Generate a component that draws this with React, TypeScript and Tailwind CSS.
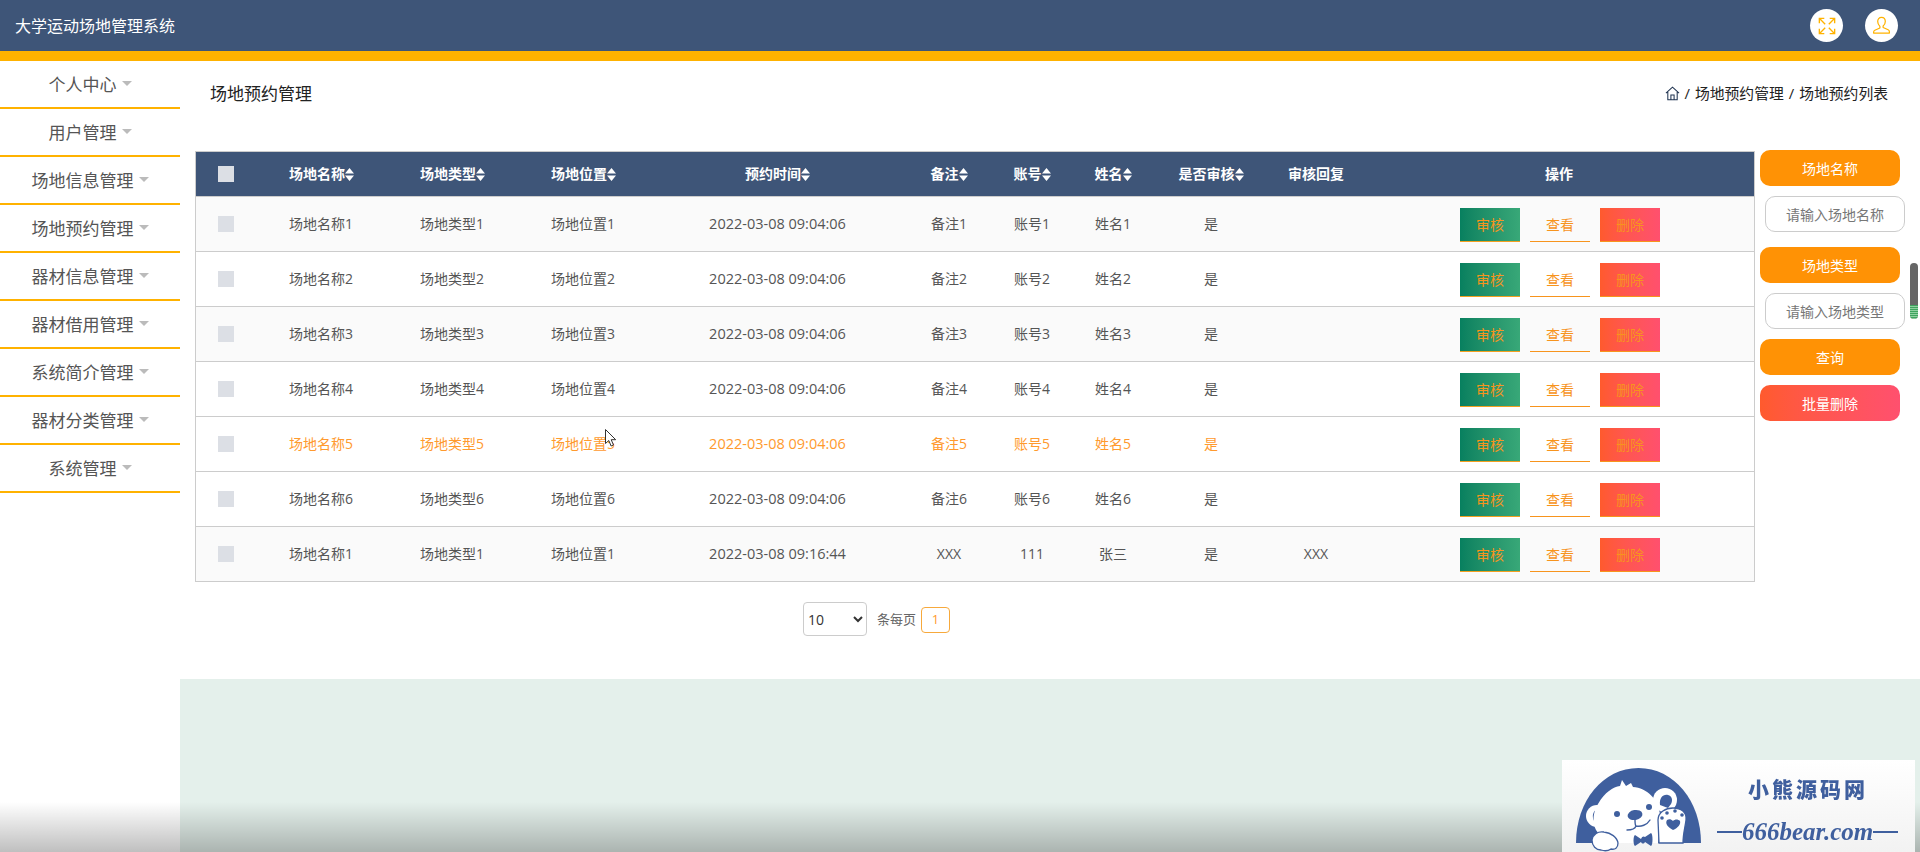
const menu = ["个人中心", "用户管理", "场地信息管理", "场地预约管理", "器材信息管理", "器材借用管理", "系统简介管理", "器材分类管理", "系统管理"]

const rows = [
  { name: "场地名称1", type: "场地类型1", place: "场地位置1", time: "2022-03-08 09:04:06", note: "备注1", account: "账号1", user: "姓名1", reply: "" },
  { name: "场地名称2", type: "场地类型2", place: "场地位置2", time: "2022-03-08 09:04:06", note: "备注2", account: "账号2", user: "姓名2", reply: "" },
  { name: "场地名称3", type: "场地类型3", place: "场地位置3", time: "2022-03-08 09:04:06", note: "备注3", account: "账号3", user: "姓名3", reply: "" },
  { name: "场地名称4", type: "场地类型4", place: "场地位置4", time: "2022-03-08 09:04:06", note: "备注4", account: "账号4", user: "姓名4", reply: "" },
  { name: "场地名称5", type: "场地类型5", place: "场地位置5", time: "2022-03-08 09:04:06", note: "备注5", account: "账号5", user: "姓名5", reply: "" },
  { name: "场地名称6", type: "场地类型6", place: "场地位置6", time: "2022-03-08 09:04:06", note: "备注6", account: "账号6", user: "姓名6", reply: "" },
  { name: "场地名称1", type: "场地类型1", place: "场地位置1", time: "2022-03-08 09:16:44", note: "XXX", account: "111", user: "张三", reply: "XXX" },
]

function Sort() {
  return (
    <svg viewBox="0 0 9 13" className="inline-block w-[9px] h-[13px] align-[-2px]" fill="#fff">
      <path d="M4.500 0 9 5.600H0zM4.500 13 0 7.400h9z" />
    </svg>
  )
}

function Head({ label, sort = true, left = false }: { label: string; sort?: boolean; left?: boolean }) {
  return (
    <th className={`font-bold text-[14px] text-white ${left ? "text-left" : "text-center"}`}>
      {label}
      {sort && <Sort />}
    </th>
  )
}

function Bear() {
  const blue = "#3f5f9e"
  return (
    <svg viewBox="0 0 125 84" className="w-[125px] h-[84px]">
      <path d="M0 75C0 33 27 0 62.500 0S125 33 125 75z" fill={blue} />
      {/* ears */}
      <circle cx="89" cy="32" r="12" fill="#fff" />
      <path d="M84 37c-1-7 3-11 8-10 4 1 5 5 3 9l-3 4z" fill={blue} />
      <circle cx="21" cy="48" r="11" fill="#fff" />
      <path d="M26 41c-6-1-10 3-9 9 0 3 3 5 5 3-1-4 0-7 4-8z" fill={blue} />
      {/* head and body */}
      <path d="M22 36C29 24 37 19 44 18L46 12L50 18L55 15L57 19C71 20 82 31 84 46L82 75H24C23 71 24 67 20 62C16 54 17 44 22 36z" fill="#fff" />
      <circle cx="41" cy="46" r="3" fill={blue} />
      <circle cx="73" cy="39" r="3" fill={blue} />
      <ellipse cx="59" cy="47" rx="7.500" ry="5" fill={blue} transform="rotate(-10 59 47)" />
      <path d="M59 52c0 3 0 5 1 6M51 62c5 0 8-1 9-4 5 1 11-1 14-6" fill="none" stroke={blue} strokeWidth="1.400" strokeLinecap="round" />
      {/* raised paw */}
      <path d="M83 75 82 52c0-8 8-12 15-12 8 0 14 4 13 12-1 8-3 14-3 23z" fill="#fff" stroke={blue} strokeWidth="1.300" />
      <circle cx="86" cy="50" r="1.800" fill={blue} />
      <circle cx="91" cy="45" r="1.800" fill={blue} />
      <circle cx="99" cy="43" r="1.800" fill={blue} />
      <circle cx="106" cy="47" r="1.800" fill={blue} />
      <path d="M97 62c-6-3-8-7-6-10 2-1 4-1 6 1 2-2 5-2 7 0 1 3-2 7-7 9z" fill={blue} />
      {/* left paw */}
      <path d="M16 72c1-6 6-9 12-8 7 1 13 5 14 11 0 5-3 7-7 6-3 2-7 2-10 1-5 0-9-4-9-10z" fill="#fff" stroke={blue} strokeWidth="1.300" />
      {/* bow tie */}
      <path d="M65 71l-6-4c-2 1-2 10 0 11l6-4c1 2 3 2 4 0l6 4c2-1 2-12 0-13l-6 4c-1-1-3-1-4 2z" fill={blue} />
    </svg>
  )
}

export default function App() {
  return (
    <div className="relative h-screen overflow-hidden bg-white flex flex-col font-['Open_Sans','Noto_Sans_CJK_SC',sans-serif] text-[14px] text-[#555]">
      <header className="h-[61px] shrink-0 bg-[#3e5578] border-b-[10px] border-[#ffb200] flex items-center pl-[15px] pr-[22px]">
        <span className="text-[16px] text-white">大学运动场地管理系统</span>
        <div className="ml-auto flex items-center gap-[22px]">
          <div className="w-[33px] h-[33px] rounded-full bg-white flex items-center justify-center">
            <svg viewBox="0 0 20 20" className="w-[18px] h-[18px]" fill="none" stroke="#ffb200" strokeWidth="1.500">
              <path d="M1.500 7V1.500H7M13 1.500h5.500V7M18.500 13v5.500H13M7 18.500H1.500V13" />
              <path d="M2 2l6 6M18 2l-6 6M18 18l-6-6M2 18l6-6" />
            </svg>
          </div>
          <div className="w-[33px] h-[33px] rounded-full bg-white flex items-center justify-center">
            <svg viewBox="0 0 20 20" className="w-[19px] h-[19px]" fill="none" stroke="#ffb200" strokeWidth="1.300" strokeLinejoin="round">
              <path d="M10 1.500c2.600 0 4 2 4 4.300 0 2.200-1 3.800-2.300 4.700v1.600l5.300 2.400c.9.400 1.300 1.100 1.300 2v1.500H1.700V17c0-.9.400-1.600 1.300-2l5.300-2.400v-1.600C7 9.600 6 8 6 5.800c0-2.300 1.400-4.300 4-4.300z" />
            </svg>
          </div>
        </div>
      </header>

      <div className="flex flex-1 min-h-0">
        <aside className="w-[180px] shrink-0">
          {menu.map((m) => (
            <div key={m} className="h-[48px] pt-px border-b-2 border-[#ffb200] flex items-center justify-center gap-[5px] text-[17px] text-[#555]">
              <span>{m}</span>
              <span className="w-0 h-0 border-x-[5px] border-x-transparent border-t-[5px] border-t-[#bbb] -mt-[3px]" />
            </div>
          ))}
        </aside>

        <main className="flex-1 min-w-0 flex flex-col">
          <div className="h-[64px] shrink-0 flex items-center justify-between pl-[30px] pr-[32px] text-[#222]">
            <span className="text-[17px] pt-px">场地预约管理</span>
            <div className="flex items-center gap-[5px] text-[14.800px]">
              <svg viewBox="0 0 16 16" className="w-[15px] h-[15px]" fill="none" stroke="#1f3350" strokeWidth="1.100">
                <path d="M1 7.500 8 1.200l7 6.300M3 6.500v8.200h10V6.500M6.300 14.700V9.500h3.400v5.200" />
              </svg>
              <span>/</span>
              <span>场地预约管理</span>
              <span>/</span>
              <span>场地预约列表</span>
            </div>
          </div>

          <div className="h-[25px] shrink-0" />

          <div className="flex items-start pl-[15px] shrink-0">
            <div className="w-[1560px] mt-px border border-[#ccc] shrink-0">
              <table className="w-full table-fixed border-collapse">
                <colgroup>
                  <col className="w-[93px]" />
                  <col className="w-[131px]" />
                  <col className="w-[131px]" />
                  <col className="w-[98px]" />
                  <col className="w-[257px]" />
                  <col className="w-[86px]" />
                  <col className="w-[80px]" />
                  <col className="w-[82px]" />
                  <col className="w-[114px]" />
                  <col className="w-[96px]" />
                  <col />
                </colgroup>
                <thead>
                  <tr className="h-[44px] bg-[#3e5578]">
                    <th className="pl-[22px] text-left">
                      <span className="block w-4 h-4 bg-[#dcdfe5]" />
                    </th>
                    <Head label="场地名称" left />
                    <Head label="场地类型" left />
                    <Head label="场地位置" left />
                    <Head label="预约时间" />
                    <Head label="备注" />
                    <Head label="账号" />
                    <Head label="姓名" />
                    <Head label="是否审核" />
                    <Head label="审核回复" sort={false} />
                    <Head label="操作" sort={false} />
                  </tr>
                </thead>
                <tbody>
                  {rows.map((r, i) => (
                    <tr
                      key={i}
                      className={`h-[55px] border-t border-[#ccc] ${i % 2 === 0 && i !== 4 ? "bg-[#fafafa]" : "bg-white"} ${i === 4 ? "text-[#ff9a2e]" : ""}`}
                    >
                      <td className="pl-[22px]">
                        <span className="block w-4 h-4 bg-[#dcdfe5]" />
                      </td>
                      <td>{r.name}</td>
                      <td>{r.type}</td>
                      <td>{r.place}</td>
                      <td className="text-center text-[14.500px]">{r.time}</td>
                      <td className="text-center">{r.note}</td>
                      <td className="text-center">{r.account}</td>
                      <td className="text-center">{r.user}</td>
                      <td className="text-center">是</td>
                      <td className="text-center">{r.reply}</td>
                      <td>
                        <div className="flex justify-center gap-[10px] pl-[2px] pt-[2px] text-[#f7941d]">
                          <button className="w-[60px] h-[34px] border-b-[1.500px] border-[#f3a01f] bg-gradient-to-r from-[#07805f] to-[#38a878]">审核</button>
                          <button className="w-[60px] h-[34px] border-b-[1.500px] border-[#f7941d]">查看</button>
                          <button className="w-[60px] h-[34px] border-b-[1.500px] border-[#f7941d] bg-gradient-to-r from-[#ff5a2d] to-[#ff506e]">删除</button>
                        </div>
                      </td>
                    </tr>
                  ))}
                </tbody>
              </table>
            </div>

            <div className="w-[145px] ml-[5px] flex flex-col items-start">
              <div className="w-[140px] h-[36px] rounded-[10px] bg-[#ff9205] text-white flex items-center justify-center">场地名称</div>
              <input placeholder="请输入场地名称" className="w-[140px] h-[36px] mt-[10px] ml-[5px] rounded-[10px] border border-[#ccc] text-center text-[14px] outline-none placeholder:text-[#777]" />
              <div className="w-[140px] h-[36px] mt-[15px] rounded-[10px] bg-[#ff9205] text-white flex items-center justify-center">场地类型</div>
              <input placeholder="请输入场地类型" className="w-[140px] h-[36px] mt-[10px] ml-[5px] rounded-[10px] border border-[#ccc] text-center text-[14px] outline-none placeholder:text-[#777]" />
              <button className="w-[140px] h-[36px] mt-[10px] rounded-[10px] bg-[#ff9205] text-white">查询</button>
              <button className="w-[140px] h-[36px] mt-[10px] rounded-[10px] bg-gradient-to-r from-[#ff5a2d] to-[#ff506e] text-white">批量删除</button>
            </div>
          </div>

          <div className="h-[97px] shrink-0 flex items-start pl-[623px] pt-[20px]">
            <select defaultValue="10" className="w-[64px] h-[34px] border border-[#ccc] rounded-[4px] bg-white text-[14px] text-[#333]">
              <option value="10">10</option>
              <option value="20">20</option>
            </select>
            <span className="ml-[10px] h-[34px] leading-[34px] text-[13px] text-[#666]">条每页</span>
            <span className="ml-[5px] mt-[5px] w-[29px] h-[26px] border border-[#f7a93c] rounded-[4px] flex items-center justify-center text-[13px] text-[#ff9a2e]">1</span>
          </div>

          <div className="flex-1 bg-[#e4f0eb]" />
        </main>
      </div>

      {/* video player shade along the bottom */}
      <div className="absolute left-0 right-0 bottom-0 h-[50px] bg-gradient-to-b from-transparent to-black/25 pointer-events-none" />

      {/* scrollbar */}
      <div className="absolute left-[1910px] top-[263px] w-2 h-[56px] rounded-full bg-[#666] overflow-hidden">
        <div className="mt-[42px] h-[14px] bg-[repeating-linear-gradient(to_bottom,#3fa45f_0,#3fa45f_1px,#8fd0a0_1px,#8fd0a0_2px)]" />
      </div>

      {/* mouse cursor */}
      <svg viewBox="0 0 12 18" className="absolute left-[605px] top-[429px] w-3 h-[18px]">
        <path d="M.5.500v14l3.300-3 2.300 5.500 2.400-1-2.300-5.300h4.500z" fill="#fff" stroke="#333" strokeWidth="1" />
      </svg>

      {/* watermark */}
      <div className="absolute left-[1562px] top-[760px] w-[353px] h-[92px] bg-gradient-to-b from-white to-[#f2f2f2] flex blur-[0.4px]">
        <div className="ml-[14px] mt-[8px]">
          <Bear />
        </div>
        <div className="ml-[16px] text-[#3f5f9e]">
          <div className="mt-[16px] ml-[31px] text-[21px] leading-[26px] tracking-[3px] font-black">小熊源码网</div>
          <div className="mt-[16px] flex items-center">
            <span className="w-[25px] h-[2px] bg-[#3f5f9e]" />
            <span className="font-['Liberation_Serif',serif] italic font-bold text-[25px] leading-[28px]">666bear.com</span>
            <span className="w-[25px] h-[2px] bg-[#3f5f9e]" />
          </div>
        </div>
      </div>
    </div>
  )
}
